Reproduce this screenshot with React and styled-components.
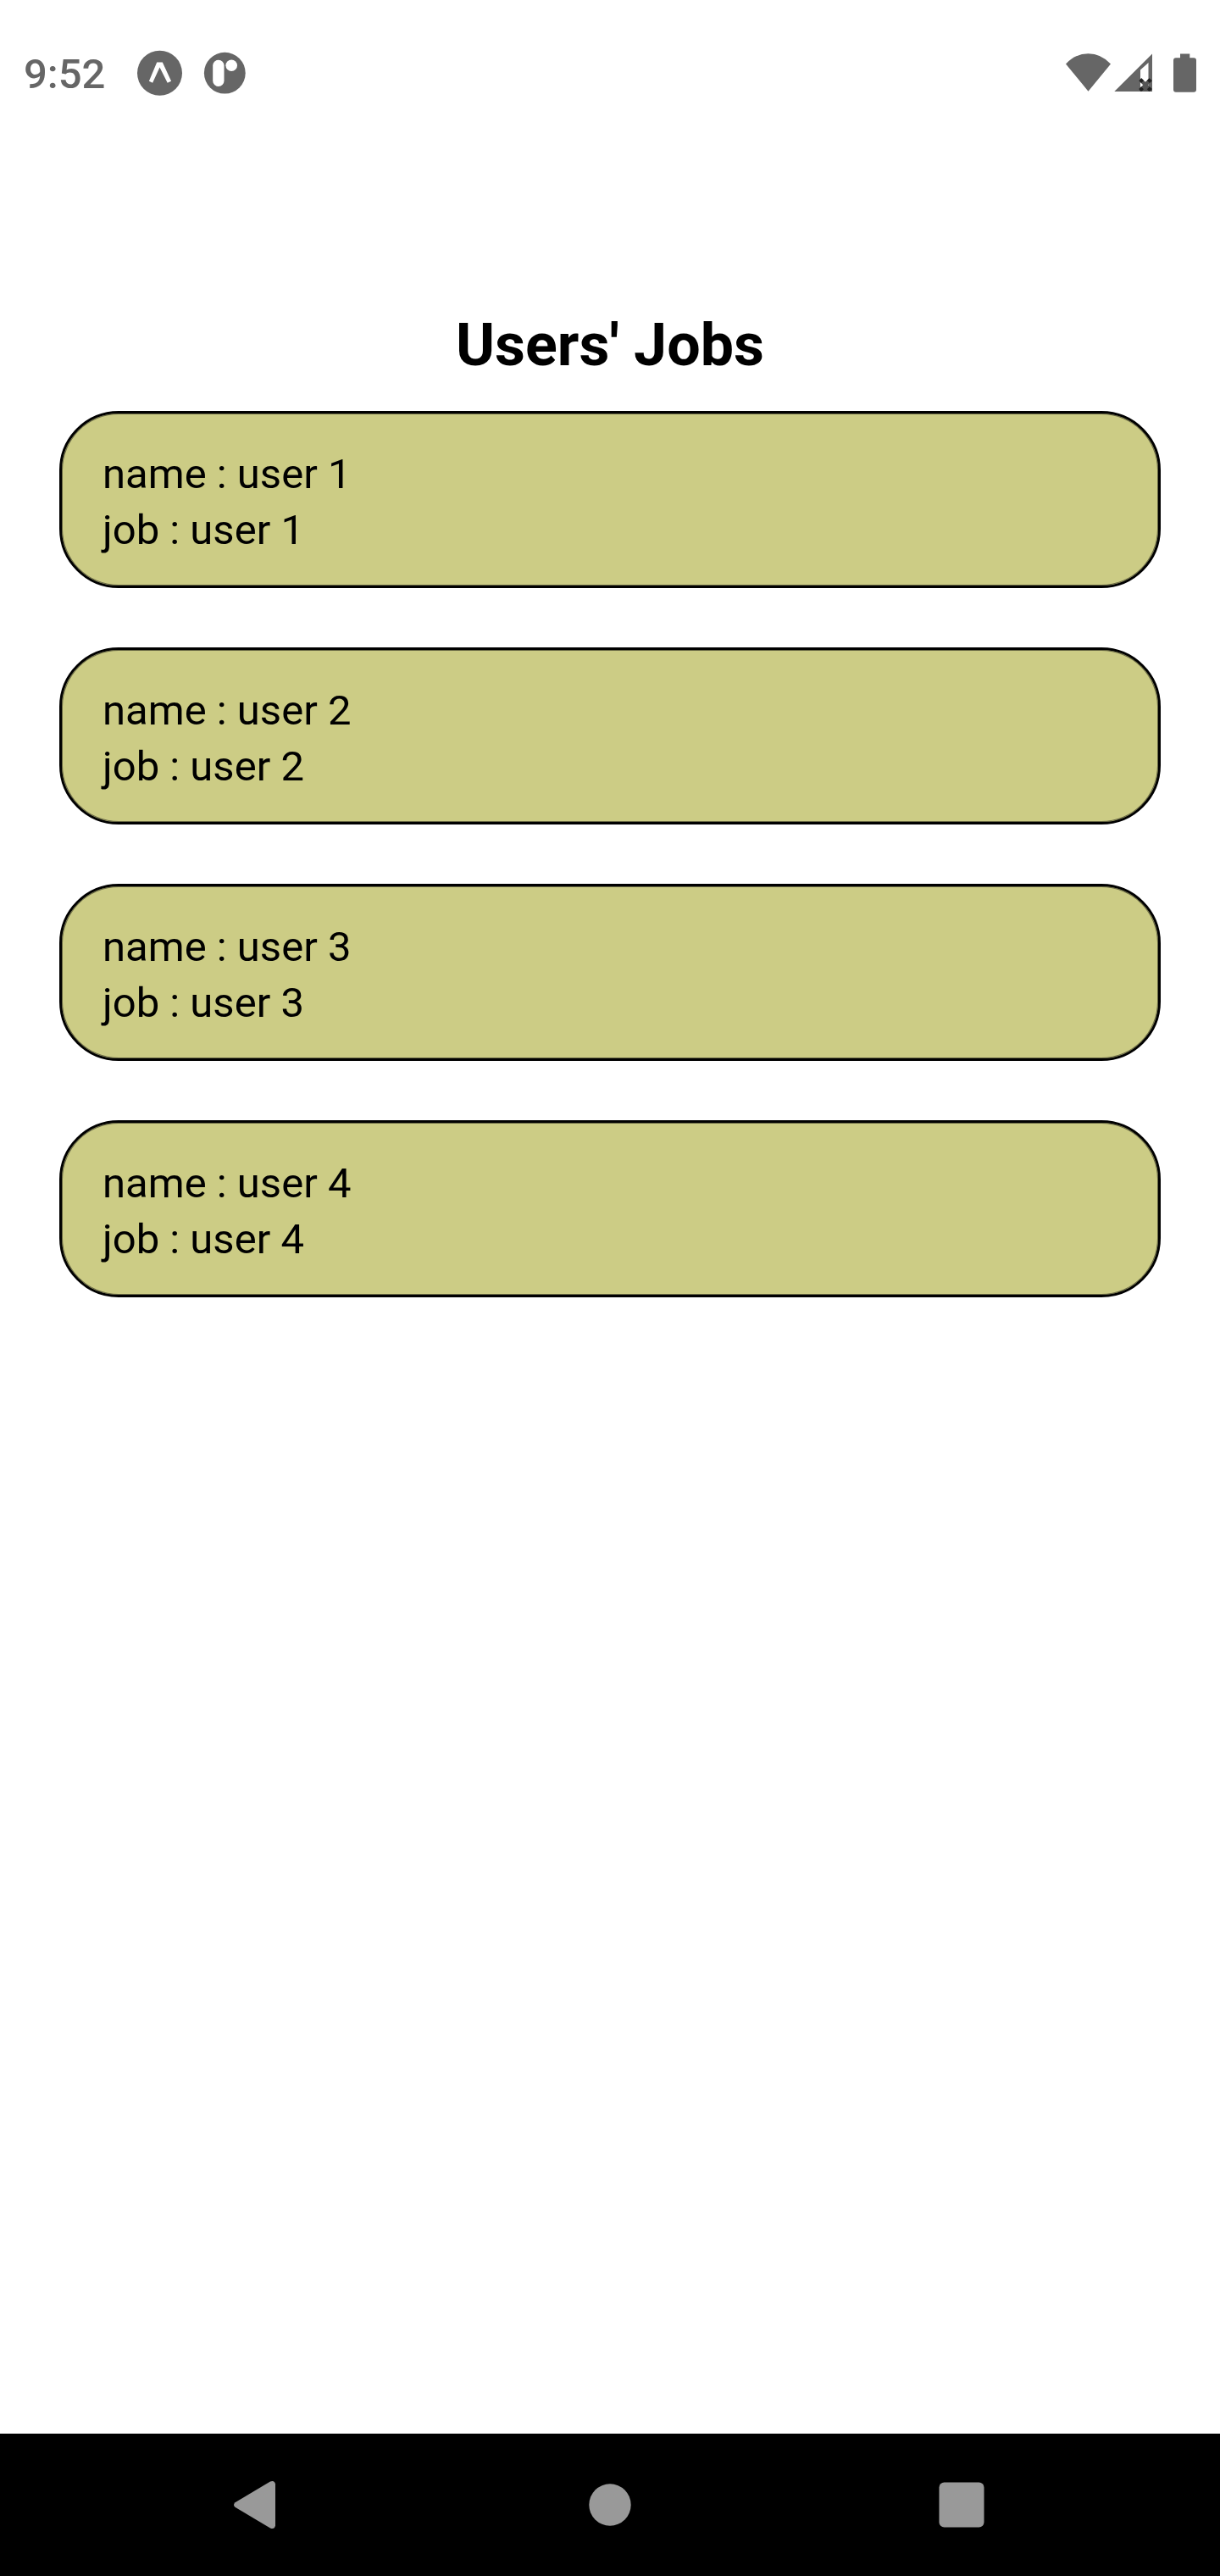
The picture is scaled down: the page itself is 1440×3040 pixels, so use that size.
import React from "react";
import styled, { createGlobalStyle } from "styled-components";

const GlobalStyle = createGlobalStyle`
  * { box-sizing: border-box; }
  body { margin: 0; background: #fff; font-family: Roboto, "Liberation Sans", sans-serif; }
`;

const Screen = styled.div`
  display: flex;
  flex-direction: column;
  width: 1440px;
  height: 3040px;
  background: #fff;
  color: #000;
`;

const StatusBar = styled.header`
  display: flex;
  align-items: center;
  justify-content: space-between;
  height: 172px;
  padding: 0 28px;
  color: #666;
`;

const StatusGroup = styled.div`
  display: flex;
  align-items: center;
`;

const Clock = styled.time`
  width: 134px;
  font-size: 49px;
  font-weight: 500;
  line-height: 58px;
  padding-top: 4px;
`;

const Glyph = styled.svg`
  display: block;
  flex: none;
  width: ${(p) => p.$w}px;
  height: ${(p) => p.$h}px;
  fill: currentColor;
`;

const Content = styled.main`
  flex: 1;
  padding: 188px 70px 0;
`;

const Title = styled.h1`
  margin: 0 0 31px;
  font-size: 70px;
  font-weight: 700;
  line-height: 94px;
  text-align: center;
`;

const JobList = styled.ul`
  display: flex;
  flex-direction: column;
  gap: 70px;
  margin: 0;
  padding: 0;
  list-style: none;
`;

const JobCard = styled.li`
  height: 209px;
  padding: 39px 48px 32px;
  border: 3px solid #000;
  border-radius: 70px;
  background: #cccc85;
  box-shadow: inset 0 0 0 1px rgba(0, 0, 0, 0.5);
`;

const Line = styled.p`
  margin: 0;
  font-size: 49px;
  line-height: 66px;
`;

const NavBar = styled.nav`
  display: grid;
  grid-template-columns: repeat(3, 415px);
  justify-content: center;
  align-items: center;
  justify-items: center;
  height: 168px;
  background: #000;
  color: #999;
`;

const jobs = [1, 2, 3, 4].map((n) => ({ id: n, name: `user ${n}`, job: `user ${n}` }));

const ExpoIcon = () => (
  <Glyph $w={54} $h={54} viewBox="0 0 54 54">
    <circle cx="26.5" cy="27.3" r="26.5" />
    <path fill="#fff" d="M23.200 14.500h6.600L40.100 36.700l-4.400 2L26.500 20.400 18.100 38.700l-4.200-2z" />
  </Glyph>
);

const AppIcon = () => (
  <Glyph $w={102} $h={54} viewBox="0 0 102 54">
    <circle cx="49.3" cy="27.2" r="24.4" />
    <rect x="35.2" y="11.7" width="13.3" height="31.2" rx="6.6" fill="#fff" />
    <circle cx="57.2" cy="18.3" r="6.8" fill="#fff" />
  </Glyph>
);

const WifiIcon = () => (
  <Glyph $w={57} $h={46} viewBox="0 0 57 46">
    <path d="M0 12.4Q11.5.2 26.500.2T53 12.4L26.500 44.800z" />
  </Glyph>
);

const SignalIcon = () => (
  <Glyph $w={70} $h={46} viewBox="0 0 70 46">
    <path fillRule="evenodd" d="M45 .5V45H.3zM31 19.500V40h9.500V11z" />
    <path
      d="M32.200 29.300l4.700 4.500 4.700-4.500 3.200 3-4.900 4.900 4.900 4.900-2.500 2.900H31.500l-2.200-2.900 4.900-4.900-4.900-4.900z"
      fill="#555"
    />
    <path
      d="M32.200 29.300l2.800 2.700-2.900 2.900-2.800-2.700zM41.600 29.300l3.200 3-2.800 2.700-3.100-3zM29.300 42l2.800-2.700 2.900 2.900-2.400 2.600h-1.300zM38.900 42.200l3-2.900 2.900 2.800-2.500 2.700h-1.300z"
      fill="#222"
    />
    <path d="M31 35.200l2.200 2-2.200 2z" fill="#fff" />
  </Glyph>
);

const BatteryIcon = () => (
  <Glyph $w={27} $h={46} viewBox="0 0 27 46">
    <path d="M8 .4h11.300v4.800H24a3 3 0 0 1 3 3v34.500a3 3 0 0 1-3 3H3a3 3 0 0 1-3-3V8.200a3 3 0 0 1 3-3h5z" />
  </Glyph>
);

const BackIcon = () => (
  <Glyph $w={58} $h={58} viewBox="276 2927 58 58">
    <path d="M277.500 2953.200L319 2928.500Q324 2926.500 325 2931.500V2980.500Q324 2985.500 319 2983.500L277.500 2958.800Q274.500 2956 277.500 2953.200z" />
  </Glyph>
);

const HomeIcon = () => (
  <Glyph $w={50} $h={50} viewBox="0 0 50 50">
    <circle cx="25" cy="25" r="24.700" />
  </Glyph>
);

const RecentsIcon = () => (
  <Glyph $w={54} $h={54} viewBox="0 0 54 54">
    <rect x="0.500" y="0.500" width="53" height="53" rx="6" />
  </Glyph>
);

export default function App() {
  return (
    <>
      <GlobalStyle />
      <Screen>
        <StatusBar>
          <StatusGroup>
            <Clock>9:52</Clock>
            <ExpoIcon />
            <AppIcon />
          </StatusGroup>
          <StatusGroup>
            <WifiIcon />
            <SignalIcon />
            <BatteryIcon />
          </StatusGroup>
        </StatusBar>
        <Content>
          <Title>Users' Jobs</Title>
          <JobList>
            {jobs.map((item) => (
              <JobCard key={item.id}>
                <Line>name : {item.name}</Line>
                <Line>job : {item.job}</Line>
              </JobCard>
            ))}
          </JobList>
        </Content>
        <NavBar>
          <BackIcon />
          <HomeIcon />
          <RecentsIcon />
        </NavBar>
      </Screen>
    </>
  );
}
